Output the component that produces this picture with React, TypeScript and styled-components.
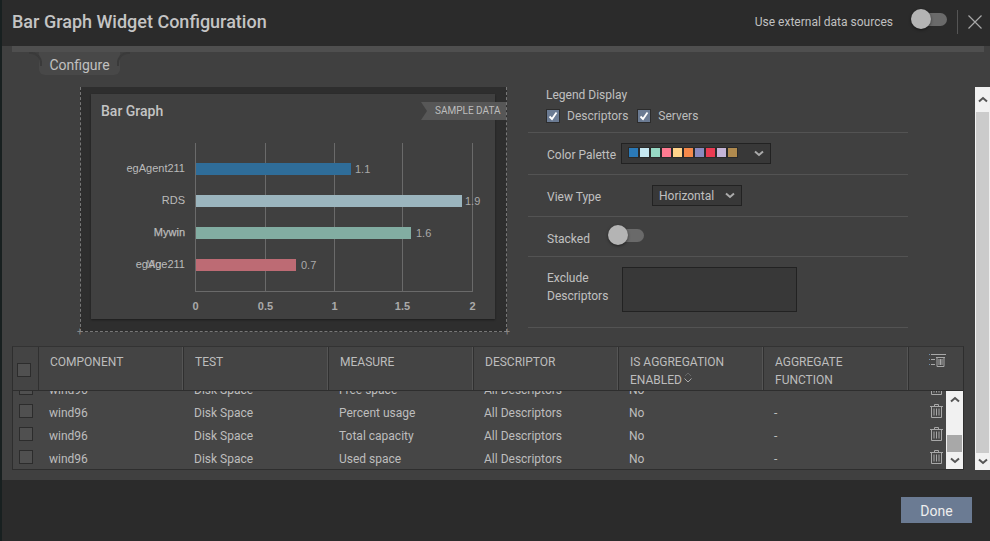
import React from "react";
import styled, { createGlobalStyle } from "styled-components";

const Global = createGlobalStyle`
  html, body { margin: 0; padding: 0; background: #2b2b2b; }
  * { box-sizing: border-box; }
`;

const Page = styled.div`
  width: 990px; height: 541px; overflow: hidden;
  display: flex; flex-direction: column;
  background: #2b2b2b;
  border-left: 2px solid #182020;
  font-family: Roboto, "Liberation Sans", sans-serif;
  font-size: 12px; color: #bdbdbd;
`;
const Header = styled.header`
  height: 46px; flex: none; display: flex; align-items: center;
  padding: 0 8px 3px 10px;
`;
const Title = styled.h1`
  margin: 0; flex: 1; font-size: 18px; font-weight: 500; color: #c4c4c4;
`;
const HeaderLabel = styled.span`
  margin-right: 26px; color: #c0c0c0; font-size: 12px;
`;
const Track = styled.span`
  position: relative; display: block; flex: none; width: 28px; height: 13px;
  border-radius: 7px; background: #6a6a6a;
`;
const Knob = styled.span`
  position: absolute; left: -8px; top: -4px; width: 20px; height: 20px;
  border-radius: 50%; background: #b4b4b4; box-shadow: 0 1px 3px rgba(0,0,0,.5);
`;
const HeaderToggle = styled.span`
  display: block; margin: -5px 0 0 0;
`;
const Divider = styled.span`
  width: 1px; height: 24px; background: #555; margin: 0 10px;
`;
const CloseIcon = styled.svg`
  width: 14px; height: 14px; display: block; flex: none;
`;

const Body = styled.main`
  height: 434px; flex: none; background: #404040;
  display: flex; flex-direction: column;
`;
const TabStrip = styled.div`
  height: 6px; margin: 0 6px 0 10px; background: #4f4f4f; flex: none;
`;
const TabRow = styled.div`
  height: 23px; flex: none; padding-left: 37px;
`;
const Tab = styled.div`
  position: relative; width: 81px; height: 23px;
  background: #484848; border-radius: 0 0 6px 6px;
  text-align: center; line-height: 26px; font-size: 14px; color: #c0c0c0;
  &::before, &::after {
    content: ""; position: absolute; top: 0; width: 11px; height: 12px;
    border-top: 2px solid #3a3a3a;
  }
  &::before { left: -10px; border-right: 2px solid #3a3a3a; border-top-right-radius: 11px; }
  &::after { right: -10px; border-left: 2px solid #3a3a3a; border-top-left-radius: 11px; }
`;
const ScrollRegion = styled.div`
  margin-top: 12px; height: 383px; flex: none; display: flex;
`;
const Content = styled.div`
  width: 973px; flex: none; padding-left: 10px;
`;
const ConfigRow = styled.div`
  height: 259px; display: flex; align-items: flex-start;
`;
const Preview = styled.div`
  position: relative; width: 427px; height: 245px; margin-left: 68px;
  background: #2e2e2e; padding: 7px 11px 11px 10px;
  border-left: 1px dashed #777; border-right: 1px dashed #777; border-bottom: 1px dashed #777;
  &::before, &::after {
    content: "+"; position: absolute; bottom: -7px; font-size: 10px; line-height: 12px; color: #888;
  }
  &::before { left: -4px; }
  &::after { right: -4px; }
`;
const ChartPanel = styled.div`
  width: 404px; height: 225px; background: #404040;
  box-shadow: 0 1px 2px rgba(0,0,0,.4);
`;
const ChartTitle = styled.div`
  height: 34px; padding: 9px 0 0 10px; font-size: 14px; font-weight: 500; color: #c4c4c4; line-height: 17px;
`;
const Ribbon = styled.div`
  position: absolute; right: 0; top: 15px; width: 85px; height: 18px;
  background: #575757; color: #bdbdbd; font-size: 10px; line-height: 18px;
  padding-left: 14px; white-space: nowrap;
  clip-path: polygon(0 0, 100% 0, 100% 100%, 0 100%, 6px 50%);
`;
const ChartSvg = styled.svg`
  display: block; width: 404px; height: 191px;
  font-family: "Liberation Sans", sans-serif; font-size: 11px;
`;

const Settings = styled.section`
  width: 380px; margin-left: 21px; flex: none;
`;
const Field = styled.div<{ $h: number }>`
  height: ${p => p.$h}px; display: flex; align-items: center;
  border-bottom: 1px solid #535353; padding-left: 19px;
`;
const LegendField = styled.div`
  height: 46px; border-bottom: 1px solid #535353; padding: 1px 0 0 18px;
`;
const LegendTitle = styled.div`
  line-height: 15px; margin-bottom: 6px; color: #c0c0c0;
`;
const LegendOptions = styled.div`
  display: flex; align-items: center; height: 14px;
`;
const CheckBox = styled.span<{ $ml?: number }>`
  width: 14px; height: 14px; flex: none; display: flex; align-items: center; justify-content: center;
  background: #6b7b93; border: 1px solid #2c2c2c; margin-left: ${p => p.$ml ?? 0}px; margin-right: 7px;
`;
const FieldLabel = styled.span<{ $w: number; $mt?: number }>`
  width: ${p => p.$w}px; flex: none; color: #c0c0c0; line-height: 18px; margin-top: ${p => p.$mt ?? 0}px;
`;
const Select = styled.div<{ $w: number }>`
  width: ${p => p.$w}px; height: 21px; flex: none; display: flex; align-items: center; justify-content: space-between;
  background: #383838; border: 1px solid #222; padding: 0 6px; color: #c0c0c0; font-size: 12px;
`;
const Swatches = styled.div`
  display: flex; margin-top: -2px;
`;
const Swatch = styled.span<{ $c: string }>`
  width: 11px; height: 11px; background: ${p => p.$c}; border: 1px solid #2a2a2a;
`;
const Chevron = styled.svg`
  width: 10px; height: 7px; display: block; flex: none;
`;
const TextBox = styled.div`
  width: 175px; height: 45px; background: #383838; border: 1px solid #222; flex: none; margin-top: -2px; align-self: flex-start;
`;
const ExcludeField = styled.div`
  height: 71px; display: flex; border-bottom: 1px solid #535353; padding: 12px 0 0 19px;
`;
const StackedToggle = styled.span`
  display: block; margin-left: 26px; margin-top: -3px;
`;

const Table = styled.div`
  width: 952px; height: 124px; background: #464646;
  border: 1px solid #2e2e2e; border-top: 1px solid #333;
  display: flex; flex-direction: column; overflow: hidden;
`;
const HeadRow = styled.div`
  height: 44px; flex: none; display: grid; grid-template-columns: 26px repeat(6, 145px) 54px;
  border-bottom: 1px solid #2e2e2e; background: #444;
`;
const HeadCell = styled.div`
  border-right: 1px solid #303030; box-shadow: inset -1px 0 0 #555;
  padding: 6px 8px 0 11px; line-height: 18px; font-size: 12px; color: #bdbdbd; position: relative;
  &:last-child { border-right: 0; box-shadow: none; padding: 6px 0 0 20px; }
`;
const HeadCheckCell = styled.div`
  border-right: 1px solid #303030; padding: 16px 0 0 4px;
`;
const EmptyBox = styled.span`
  display: block; width: 14px; height: 14px; background: #505050; border: 1px solid #2c2c2c;
`;
const SortIcon = styled.svg`
  display: inline-block; width: 10px; height: 11px; margin-left: 1px; vertical-align: 1px;
`;
const RowsArea = styled.div`
  flex: 1; min-height: 0; display: flex;
`;
const Rows = styled.div`
  flex: 1; min-width: 0; display: flex; flex-direction: column; justify-content: flex-end; overflow: hidden;
`;
const Row = styled.div`
  height: 23px; flex: none; padding-top: 2px; display: grid; grid-template-columns: 25px repeat(6, 145px) 39px; align-items: center; color: #bdbdbd;
`;
const RowCheck = styled.span`
  display: block; padding: 0 0 4px 6px;
`;
const Cell = styled.span`
  padding-left: 11px; white-space: nowrap;
`;
const TrashCell = styled.span`
  display: flex; padding: 0 0 4px 22px;
  svg { flex: none; }
`;
const Bar = styled.div<{ $w: number }>`
  width: ${p => p.$w}px; flex: none; background: #f1f1f1; display: flex; flex-direction: column; align-items: center;
`;
const BarButton = styled.div<{ $h: number }>`
  height: ${p => p.$h}px; flex: none; display: flex; align-items: center; justify-content: center; width: 100%;
`;
const BarSpace = styled.div`
  flex: 1; width: 100%;
`;
const BarThumb = styled.div<{ $h: number; $c: string }>`
  height: ${p => p.$h}px; width: calc(100% - 2px); flex: none; background: ${p => p.$c};
`;

const Footer = styled.footer`
  flex: 1; display: flex; justify-content: flex-end; align-items: flex-start; padding: 17px 18px 0 0;
`;
const DoneButton = styled.button`
  width: 71px; height: 26px; border: 0; background: #6b7b93; color: #eee;
  font-family: Roboto, "Liberation Sans", sans-serif; font-size: 14px; padding: 2px 0 0;
`;

const Toggle = () => <Track><Knob /></Track>;

const ChevDown = ({ c = "#aaa" }: { c?: string }) => (
  <Chevron viewBox="0 0 10 7"><path d="M1 1.5 L5 5 L9 1.5" fill="none" stroke={c} strokeWidth="2" /></Chevron>
);
const ChevUp = ({ c = "#555" }: { c?: string }) => (
  <Chevron viewBox="0 0 10 7"><path d="M1 5.5 L5 2 L9 5.5" fill="none" stroke={c} strokeWidth="2" /></Chevron>
);
const Trash = () => (
  <svg width="13" height="14" viewBox="0 0 13 14" fill="none" stroke="#a8a8a8" strokeWidth="1">
    <path d="M0 2.5H13M4.5 2.5V.5H8.5V2.5M1.5 2.5V13.5H11.5V2.5M4 4.5V11.5M6.5 4.5V11.5M9 4.5V11.5" />
  </svg>
);
const ColumnTrash = () => (
  <svg width="17" height="14" viewBox="0 0 17 14" fill="none" strokeWidth="1">
    <path d="M0 1.5H1M0 6.5H1M0 11.5H1" stroke="#6f8fae" />
    <path d="M2 1.5H17M2 6.5H6M2 11.5H6" stroke="#a8a8a8" />
    <path d="M8 4.5V13.5H15V4.5M7 4.5H16M10 6V12M11.5 6V12M13 6V12" stroke="#a8a8a8" />
  </svg>
);
const Tick = () => (
  <svg width="10" height="10" viewBox="0 0 10 10"><path d="M1.5 5.5 L4 8 L8.5 1.5" fill="none" stroke="#fff" strokeWidth="1.8" /></svg>
);

const bars = [
  { label: "egAgent211", y: 163, end: 351, color: "#2f6d99", value: "1.1", vx: 355 },
  { label: "RDS", y: 195, end: 462, color: "#9bb5be", value: "1.9", vx: 465 },
  { label: "Mywin", y: 227, end: 411, color: "#82ada2", value: "1.6", vx: 416 },
  { label: "egAge211", y: 259, end: 296, color: "#bd6b74", value: "0.7", vx: 301 },
];
const grid = [195.5, 265.5, 334.5, 402.5, 472.5];
const ticks = ["0", "0.5", "1", "1.5", "2"];
const palette = ["#2b7ab8", "#c6e8f2", "#97d8c4", "#ff7b91", "#ffd38a", "#f5894a", "#8a8abf", "#ea3b52", "#c5b5d8", "#b08a4e"];

const Chart = () => (
  <ChartSvg viewBox="91 128 404 191">
    {grid.map(x => <line key={x} x1={x} x2={x} y1={143} y2={291} stroke="#6a6a6a" />)}
    <line x1={195} x2={473} y1={291.5} y2={291.5} stroke="#6a6a6a" />
    {bars.map(b => (
      <g key={b.label}>
        <rect x={196} y={b.y} width={b.end - 196} height={12} fill={b.color} />
        <text x={185} y={b.y + 9} textAnchor="end" fill="#bbb" stroke={b.label === "Mywin" ? "#bbb" : "none"} strokeWidth={0.25}>{b.label}</text>
        <text x={b.vx} y={b.y + 10} fill="#aaa">{b.value}</text>
      </g>
    ))}
    <text x={146} y={268} fill="#bbb" opacity={0.7}>Mg</text>
    {ticks.map((t, i) => (
      <text key={t} x={grid[i]} y={310} textAnchor="middle" fill="#aaa" fontWeight="bold">{t}</text>
    ))}
  </ChartSvg>
);

const rows = [
  { measure: "Free space", agg: "" },
  { measure: "Percent usage", agg: "-" },
  { measure: "Total capacity", agg: "-" },
  { measure: "Used space", agg: "-" },
];

export default function App() {
  return (
    <Page>
      <Global />
      <Header>
        <Title>Bar Graph Widget Configuration</Title>
        <HeaderLabel>Use external data sources</HeaderLabel>
        <HeaderToggle><Toggle /></HeaderToggle>
        <Divider />
        <CloseIcon viewBox="0 0 14 14"><path d="M.5 .5 L13.5 13.5 M13.5 .5 L.5 13.5" stroke="#a8a8a8" strokeWidth="1.2" /></CloseIcon>
      </Header>
      <Body>
        <TabStrip />
        <TabRow><Tab>Configure</Tab></TabRow>
        <ScrollRegion>
          <Content>
            <ConfigRow>
              <Preview>
                <ChartPanel>
                  <ChartTitle>Bar Graph</ChartTitle>
                  <Chart />
                </ChartPanel>
                <Ribbon>SAMPLE DATA</Ribbon>
              </Preview>
              <Settings>
                <LegendField>
                  <LegendTitle>Legend Display</LegendTitle>
                  <LegendOptions>
                    <CheckBox><Tick /></CheckBox>
                    <span>Descriptors</span>
                    <CheckBox $ml={9}><Tick /></CheckBox>
                    <span>Servers</span>
                  </LegendOptions>
                </LegendField>
                <Field $h={42}>
                  <FieldLabel $w={74} $mt={2}>Color Palette</FieldLabel>
                  <Select $w={150}>
                    <Swatches>{palette.map(c => <Swatch key={c} $c={c} />)}</Swatches>
                    <ChevDown />
                  </Select>
                </Field>
                <Field $h={42}>
                  <FieldLabel $w={105} $mt={2}>View Type</FieldLabel>
                  <Select $w={90}>
                    <span>Horizontal</span>
                    <ChevDown />
                  </Select>
                </Field>
                <Field $h={40}>
                  <FieldLabel $w={43} $mt={4}>Stacked</FieldLabel>
                  <StackedToggle><Toggle /></StackedToggle>
                </Field>
                <ExcludeField>
                  <FieldLabel $w={75}>Exclude<br />Descriptors</FieldLabel>
                  <TextBox />
                </ExcludeField>
              </Settings>
            </ConfigRow>
            <Table>
              <HeadRow>
                <HeadCheckCell><EmptyBox /></HeadCheckCell>
                <HeadCell>COMPONENT</HeadCell>
                <HeadCell>TEST</HeadCell>
                <HeadCell>MEASURE</HeadCell>
                <HeadCell>DESCRIPTOR</HeadCell>
                <HeadCell>
                  IS AGGREGATION<br />ENABLED
                  <SortIcon viewBox="0 0 10 11" fill="none">
                    <path d="M2 4 L5 1 L8 4" stroke="#666" />
                    <path d="M1.5 6.5 L5 10 L8.5 6.5" stroke="#aaa" />
                  </SortIcon>
                </HeadCell>
                <HeadCell>AGGREGATE<br />FUNCTION</HeadCell>
                <HeadCell><ColumnTrash /></HeadCell>
              </HeadRow>
              <RowsArea>
                <Rows>
                  {rows.map(r => (
                    <Row key={r.measure}>
                      <RowCheck><EmptyBox /></RowCheck>
                      <Cell>wind96</Cell>
                      <Cell>Disk Space</Cell>
                      <Cell>{r.measure}</Cell>
                      <Cell>All Descriptors</Cell>
                      <Cell>No</Cell>
                      <Cell>{r.agg}</Cell>
                      <TrashCell><Trash /></TrashCell>
                    </Row>
                  ))}
                </Rows>
                <Bar $w={17}>
                  <BarButton $h={17}><ChevUp /></BarButton>
                  <BarSpace />
                  <BarThumb $h={17} $c="#a8a8a8" />
                  <BarButton $h={17}><ChevDown c="#555" /></BarButton>
                </Bar>
              </RowsArea>
            </Table>
          </Content>
          <Bar $w={15}>
            <BarButton $h={25}><ChevUp /></BarButton>
            <BarThumb $h={341} $c="#cbcbcb" />
            <BarButton $h={17}><ChevDown c="#555" /></BarButton>
          </Bar>
        </ScrollRegion>
      </Body>
      <Footer><DoneButton>Done</DoneButton></Footer>
    </Page>
  );
}
